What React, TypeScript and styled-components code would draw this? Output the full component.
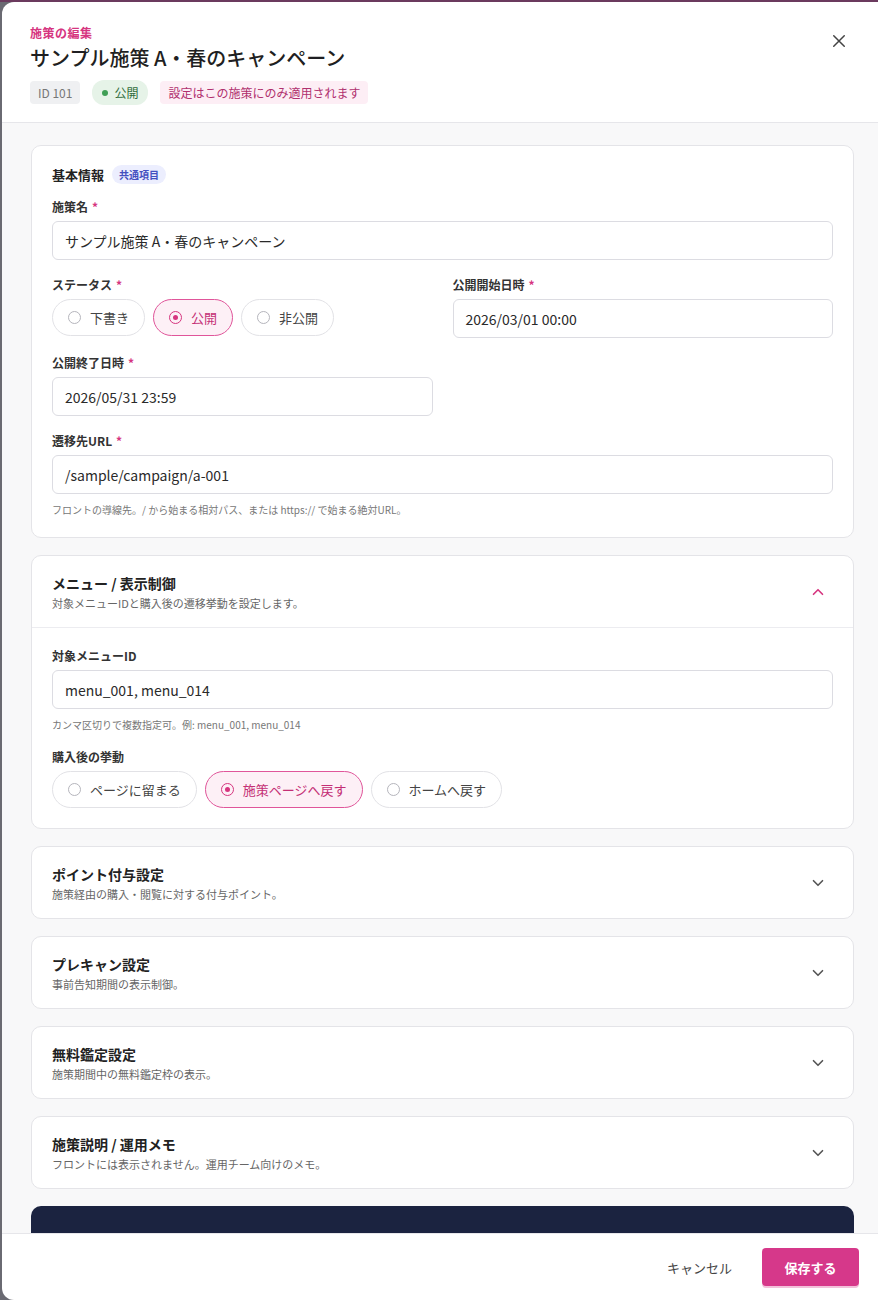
import React from "react";
import styled, { createGlobalStyle } from "styled-components";

const G = createGlobalStyle`
  html,body{margin:0;padding:0;background:#5d5866;}
  body{font-family:"Noto Sans CJK JP","Noto Sans",sans-serif;color:#222;}
  *{box-sizing:border-box;}
`;
const Backdrop = styled.div`height:1300px;padding:2px 0 0 2px;background:linear-gradient(#6b3a5e 0 2px,#6a6a72 2px);overflow:hidden;`;
const Modal = styled.div`height:1298px;background:#fff;border-radius:12px 0 0 12px;display:flex;flex-direction:column;overflow:hidden;`;
const Header = styled.div`padding:22px 28px 17px;border-bottom:1px solid #e6e6ea;position:relative;flex-shrink:0;`;
const Eyebrow = styled.div`color:#d6357f;font-size:12px;font-weight:600;letter-spacing:0.5px;`;
const Title = styled.h1`margin:2px 0 8px;font-size:20px;font-weight:500;color:#1f1f22;`;
const Chips = styled.div`display:flex;gap:12px;align-items:center;`;
const Chip = styled.span<{v:"gray"|"green"|"pink"}>`
  font-size:12px;padding:${p=>p.v==="green"?"4px 10px":"3px 8px"};border-radius:${p=>p.v==="green"?"12px":"4px"};
  background:${p=>p.v==="gray"?"#eff0f2":p.v==="green"?"#e6f3e8":"#fdeef5"};
  color:${p=>p.v==="gray"?"#777":p.v==="green"?"#2f6b3a":"#b0306e"};display:inline-flex;align-items:center;gap:6px;
`;
const Dot = styled.span`width:6px;height:6px;border-radius:50%;background:#3f9f55;`;
const Close = styled.button`position:absolute;right:30px;top:30px;border:0;background:none;padding:0;cursor:pointer;`;
const Body = styled.div`flex:1;background:#f8f8f9;padding:22px 24px 0 29px;display:flex;flex-direction:column;gap:17px;overflow:hidden;`;
const Card = styled.div`background:#fff;border:1px solid #e4e4e8;border-radius:10px;flex-shrink:0;`;
const CardPad = styled.div`padding:19px 20px 20px;display:flex;flex-direction:column;gap:16px;`;
const SecTitle = styled.div`display:flex;align-items:center;gap:8px;font-size:13px;font-weight:700;margin-bottom:-2px;`;
const Tag = styled.span`font-size:10px;font-weight:600;color:#4450c0;background:#eceefe;padding:2px 7px;border-radius:10px;`;
const Field = styled.div`display:flex;flex-direction:column;gap:6px;`;
const Label = styled.div`font-size:12px;font-weight:600;color:#333;span{color:#d6357f;margin-left:4px;}`;
const Input = styled.div`height:39px;border:1px solid #dcdce2;border-radius:6px;padding:0 12px;display:flex;align-items:center;font-size:14px;color:#2a2a2a;`;
const Help = styled.div`font-size:10px;color:#777;margin-top:2px;`;
const Row = styled.div`display:grid;grid-template-columns:1fr 1fr;gap:20px;`;
const Radios = styled.div`display:flex;gap:8px;`;
const Pill = styled.div<{on?:boolean}>`height:37px;border-radius:19px;padding:0 15px;display:flex;align-items:center;gap:9px;font-size:13px;
  border:1px solid ${p=>p.on?"#e0559a":"#e2e2e6"};background:${p=>p.on?"#fdf0f6":"#fff"};color:${p=>p.on?"#c42f75":"#444"};`;
const Circle = styled.span<{on?:boolean}>`width:13px;height:13px;border-radius:50%;border:1.5px solid ${p=>p.on?"#d6357f":"#b5b5bc"};display:flex;align-items:center;justify-content:center;
  &::after{content:"";width:5px;height:5px;border-radius:50%;background:${p=>p.on?"#d6357f":"transparent"};}`;
const AccHead = styled.div<{open?:boolean}>`padding:17px 26px 16px 20px;display:flex;align-items:center;justify-content:space-between;${p=>p.open?"border-bottom:1px solid #ececf0;":""}`;
const AccTitle = styled.div`font-size:14px;font-weight:700;color:#222;`;
const AccSub = styled.div`font-size:11px;color:#666;margin-top:2px;`;
const Dark = styled.div`height:40px;background:#1b2340;border-radius:10px 10px 0 0;flex-shrink:0;`;
const Footer = styled.div`height:67px;flex-shrink:0;border-top:1px solid #e6e6ea;display:flex;justify-content:flex-end;align-items:center;gap:24px;padding:0 19px 0 0;`;
const Ghost = styled.button`border:0;background:none;font:inherit;font-size:13px;color:#444;`;
const Primary = styled.button`border:0;background:#d6388a;color:#fff;font:inherit;font-size:13px;font-weight:600;width:97px;height:38px;border-radius:4px;box-shadow:0 2px 0 #f2c1da;`;

const Chev = ({up,color}:{up?:boolean;color:string}) => (
  <svg width="18" height="18" viewBox="0 0 24 24" fill="none" stroke={color} strokeWidth="2.2" strokeLinecap="round" strokeLinejoin="round">
    <path d={up?"M6 15l6-6 6 6":"M6 9l6 6 6-6"}/>
  </svg>
);

const Acc = ({t,s}:{t:string;s:string}) => (
  <Card><AccHead><div><AccTitle>{t}</AccTitle><AccSub>{s}</AccSub></div><Chev color="#555"/></AccHead></Card>
);

export default function App(){
  return <><G/><Backdrop><Modal>
    <Header>
      <Eyebrow>施策の編集</Eyebrow>
      <Title>サンプル施策 A・春のキャンペーン</Title>
      <Chips><Chip v="gray">ID 101</Chip><Chip v="green"><Dot/>公開</Chip><Chip v="pink">設定はこの施策にのみ適用されます</Chip></Chips>
      <Close><svg width="18" height="18" viewBox="0 0 24 24" stroke="#444" strokeWidth="2" strokeLinecap="round"><path d="M5 5l14 14M19 5L5 19"/></svg></Close>
    </Header>
    <Body>
      <Card><CardPad>
        <SecTitle>基本情報<Tag>共通項目</Tag></SecTitle>
        <Field><Label>施策名<span>*</span></Label><Input>サンプル施策 A・春のキャンペーン</Input></Field>
        <Row>
          <Field><Label>ステータス<span>*</span></Label><Radios>
            <Pill><Circle/>下書き</Pill><Pill on><Circle on/>公開</Pill><Pill><Circle/>非公開</Pill></Radios></Field>
          <Field><Label>公開開始日時<span>*</span></Label><Input>2026/03/01 00:00</Input></Field>
        </Row>
        <Row><Field><Label>公開終了日時<span>*</span></Label><Input>2026/05/31 23:59</Input></Field></Row>
        <Field><Label>遷移先URL<span>*</span></Label><Input>/sample/campaign/a-001</Input><Help>フロントの導線先。/ から始まる相対パス、または https:// で始まる絶対URL。</Help></Field>
      </CardPad></Card>
      <Card>
        <AccHead open><div><AccTitle>メニュー / 表示制御</AccTitle><AccSub>対象メニューIDと購入後の遷移挙動を設定します。</AccSub></div><Chev up color="#d6357f"/></AccHead>
        <CardPad>
          <Field><Label>対象メニューID</Label><Input>menu_001, menu_014</Input><Help>カンマ区切りで複数指定可。例: menu_001, menu_014</Help></Field>
          <Field><Label>購入後の挙動</Label><Radios>
            <Pill><Circle/>ページに留まる</Pill><Pill on><Circle on/>施策ページへ戻す</Pill><Pill><Circle/>ホームへ戻す</Pill></Radios></Field>
        </CardPad>
      </Card>
      <Acc t="ポイント付与設定" s="施策経由の購入・閲覧に対する付与ポイント。"/>
      <Acc t="プレキャン設定" s="事前告知期間の表示制御。"/>
      <Acc t="無料鑑定設定" s="施策期間中の無料鑑定枠の表示。"/>
      <Acc t="施策説明 / 運用メモ" s="フロントには表示されません。運用チーム向けのメモ。"/>
      <Dark/>
    </Body>
    <Footer><Ghost>キャンセル</Ghost><Primary>保存する</Primary></Footer>
  </Modal></Backdrop></>;
}
